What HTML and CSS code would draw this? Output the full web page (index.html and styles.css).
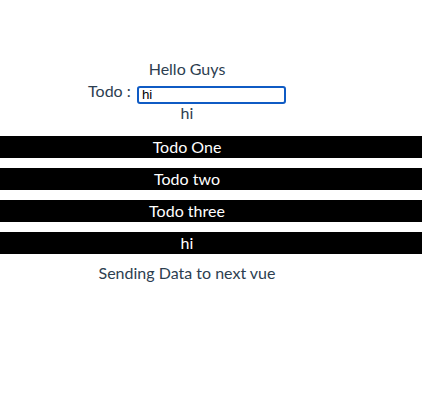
FILE: index.html
```html
<!DOCTYPE html>
<html>
<head>
<meta charset="utf-8">
<link rel="stylesheet" href="styles.css">
</head>
<body>
<div class="app">
  <div class="content">
    <div class="line">Hello Guys</div>
    <div class="line">Todo : <input class="todo-input" type="text" value="hi"></div>
    <div class="line">hi</div>
  </div>
  <ul class="todos">
    <li class="todo">Todo One</li>
    <li class="todo">Todo two</li>
    <li class="todo">Todo three</li>
    <li class="todo">hi</li>
  </ul>
  <div class="content">
    <div class="line">Sending Data to next vue</div>
  </div>
</div>
</body>
</html>
```

FILE: styles.css
```css
html, body {
  margin: 0;
  padding: 0;
  background: #fff;
}
.app {
  font-family: Lato, "Noto Sans", sans-serif;
  font-weight: 400;
  font-size: 16px;
  color: #2c3e50;
  text-align: center;
  padding-top: 58px;
}
.content {
  width: 374px;
}
.line {
  line-height: 22px;
  height: 22px;
}
.todo-input {
  box-sizing: border-box;
  width: 149px;
  height: 18px;
  margin: 0 0 0 2px;
  padding: 0 3px;
  border: 2px solid #0f5bc4;
  border-radius: 3px;
  font-family: "Liberation Sans", Arial, sans-serif;
  font-weight: 400;
  font-size: 13.33px;
  color: #000;
  vertical-align: -2px;
  outline: none;
}
.todos {
  list-style: none;
  margin: 12px 0 0;
  padding: 0;
}
.todo {
  background: #000;
  color: #fff;
  height: 22px;
  line-height: 22px;
  padding-right: 48px;
  margin-bottom: 10px;
}
.todos + .content {
  margin-top: -2px;
}
```
